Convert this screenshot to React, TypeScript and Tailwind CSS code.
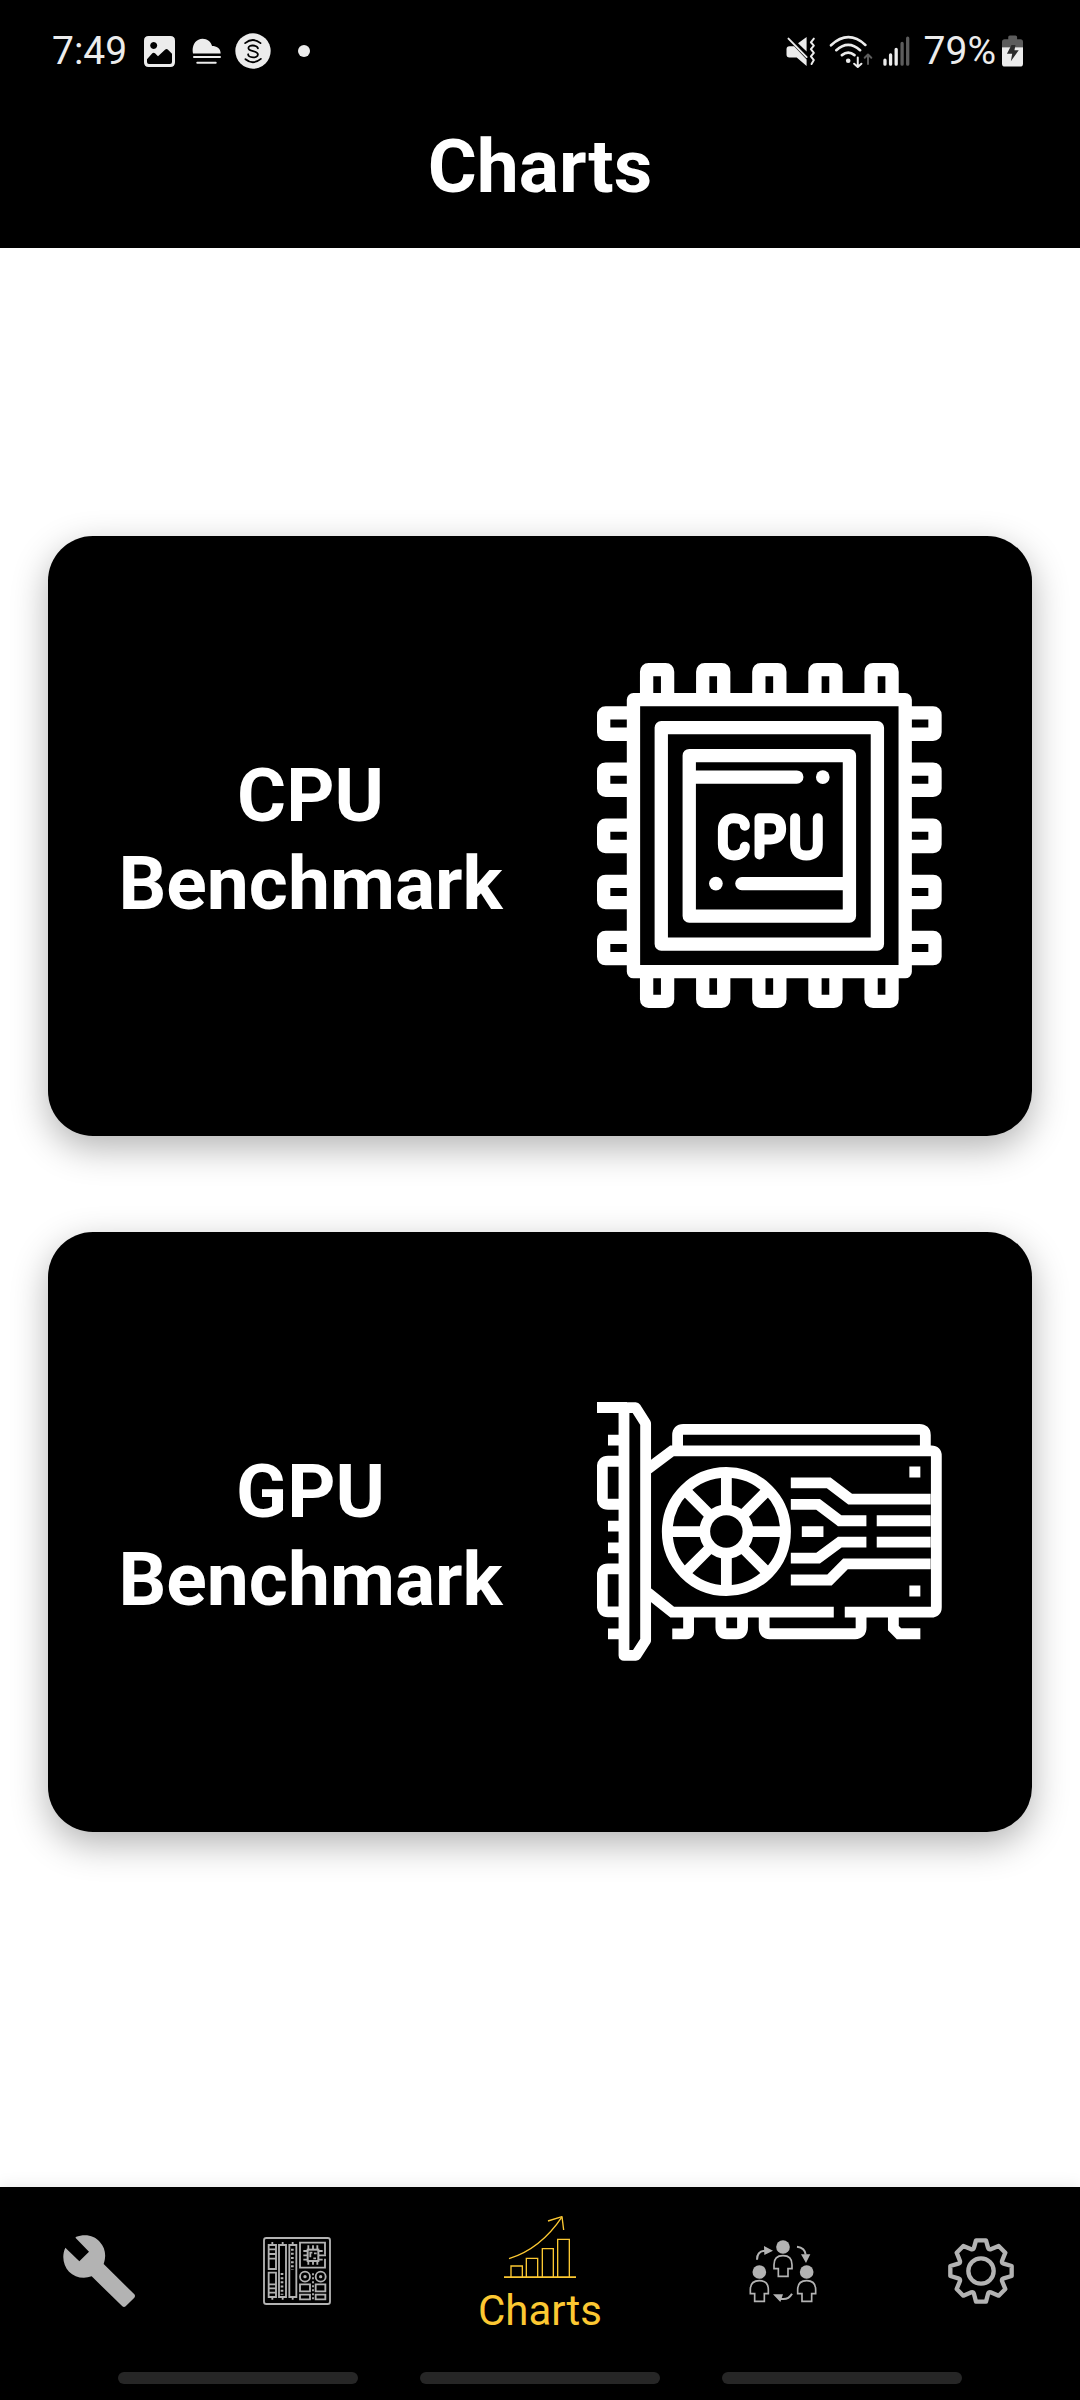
import type { ReactNode } from "react";

/* ---------- status bar icons ---------- */

function PictureIcon() {
  return (
    <svg viewBox="342 48 93 93" className="h-[31px] w-[31px]" aria-hidden="true">
      <path
        fill="#ececec"
        fillRule="evenodd"
        d="M356 48h65q14 0 14 14v65q0 14-14 14h-65q-14 0-14-14V62q0-14 14-14z M371 66a10.500 10.500 0 1 0 .1 0z M351 118l16-18q4-4 8 0l9 9 21-20q5-4 9 0l12 12v25q0 6-6 6h-63q-6 0-6-6z"
      />
    </svg>
  );
}

function FogIcon() {
  return (
    <svg viewBox="486 54 88 80" className="h-[27px] w-[29px]" aria-hidden="true">
      <path fill="#ececec" d="M489 100c-5-24 8-45 29-45 15 0 25 9 29 22 13 0 26 6 26 23z" />
      <path stroke="#ececec" strokeWidth="6" strokeLinecap="round" d="M492 111h79M502 128h56" />
    </svg>
  );
}

function CoinIcon() {
  return (
    <svg viewBox="616 39 108 110" className="h-9 w-9" aria-hidden="true">
      <circle cx="670" cy="94" r="54" fill="#ececec" />
      <g fill="none" stroke="#000" strokeWidth="5.500" strokeLinecap="round">
        <path d="M646 70q24-19 47 0M647 119q23 19 47-1" />
        <path d="M685 86c-1-10-29-13-29-1 0 13 29 6 29 20 0 12-29 11-30-1" />
      </g>
    </svg>
  );
}

function MuteIcon() {
  return (
    <svg viewBox="48 48 90 88" className="h-[29px] w-[30px]" aria-hidden="true">
      <path fill="#ececec" d="M58 76h14l38 40v20L80 110H58q-9 0-9-9V85q0-9 9-9zM84 67l26-19v44z" />
      <path stroke="#ececec" strokeWidth="6" strokeLinecap="round" d="M55 53l55 56" />
      <path
        fill="none"
        stroke="#ececec"
        strokeWidth="6"
        strokeLinecap="round"
        strokeLinejoin="round"
        d="M132 53l-9 11 9 10-9 11 9 11-9 11 9 11-7 12"
      />
    </svg>
  );
}

function WifiIcon() {
  return (
    <svg viewBox="178 40 134 100" className="h-[33px] w-[45px]" aria-hidden="true">
      <g fill="none" stroke="#ececec" strokeWidth="8" strokeLinecap="round">
        <path d="M183 71q52-48 104-1M199 86q36-32 72 0M216 101q19-15 38 0" />
        <path strokeWidth="6" strokeLinejoin="round" d="M264 108v28M253 127l11 10 11-10" />
      </g>
      <circle cx="235" cy="118" r="7" fill="#ececec" />
      <path
        fill="none"
        stroke="#5c5c5c"
        strokeWidth="6"
        strokeLinecap="round"
        strokeLinejoin="round"
        d="M295 128V100M285 109l10-10 10 10"
      />
    </svg>
  );
}

function SignalIcon() {
  return (
    <svg viewBox="339 46 82 90" className="h-[30px] w-[27px]" aria-hidden="true">
      <g strokeWidth="10" strokeLinecap="round">
        <path stroke="#ececec" d="M345 119v12M362 103v28M379 86v45" />
        <path stroke="#5c5c5c" d="M397 68v63M414 52v79" />
      </g>
    </svg>
  );
}

function BatteryIcon() {
  return (
    <svg viewBox="698 46 64 95" className="h-8 w-[21px]" aria-hidden="true">
      <path fill="#5c5c5c" d="M717 51q0-5 5-5h17q5 0 5 5v7h10q8 0 8 8v16h-64V66q0-8 8-8h11z" />
      <path fill="#ececec" d="M698 82h64v50q0 9-9 9h-46q-9 0-9-9z" />
      <path fill="#2b2b2b" d="M727 75l12 0-3 16h13l-24 34 4-23h-16z" />
    </svg>
  );
}

/* ---------- card illustrations ---------- */

const PINS = [0, 168.500, 337, 505.500, 674];

function CpuArt() {
  return (
    <svg viewBox="51 54 1036 1036" className="w-full" aria-hidden="true">
      <g fill="none" stroke="#fff" strokeWidth="40" strokeLinejoin="round">
        {PINS.map((p) => (
          <g key={p}>
            <path d={`M${200 + p} 164V80q0-6 6-6h51q6 0 6 6V164`} />
            <path d={`M${200 + p} 980v84q0 6 6 6h51q6 0 6-6V980`} />
            <path d={`M160 ${204 + p}H77q-6 0-6 6v52q0 6 6 6H160`} />
            <path d={`M977 ${204 + p}h83q6 0 6 6v52q0 6-6 6H977`} />
          </g>
        ))}
        <rect x="160.500" y="164" width="816" height="817" />
        <rect x="244" y="248" width="649" height="650" />
        <rect x="328" y="332" width="481" height="482" />
        <path strokeLinecap="round" d="M334 396.500H651M486 716.500H806" />
      </g>
      <circle cx="729" cy="396.500" r="20.500" fill="#fff" />
      <circle cx="408" cy="716.500" r="20.500" fill="#fff" />
      <g fill="none" stroke="#fff" strokeWidth="30" strokeLinecap="round" strokeLinejoin="round">
        <path d="M495 543v-1c0-14-14-22-33-22s-33 14-33 33v45c0 20 14 34 33 34s33-11 33-26" />
        <path d="M539 629V520h33q32 0 32 32v0q0 32-32 32h-33" />
        <path d="M646 520v79q0 33 34 33t34-33V520" />
      </g>
    </svg>
  );
}

function GpuArt() {
  return (
    <svg viewBox="51 67 1036 779" className="w-full" aria-hidden="true">
      <g fill="none" stroke="#fff" strokeWidth="32.500">
        <path strokeLinejoin="round" d="M132 84V828h36l29-45V131L167 84h-35" />
        <path d="M51 83.500h90M84 181.500h40M84 439.500h40M84 505h40M84 763.500h40" />
        <path d="M124 245H84q-17 0-17 17v95q0 17 17 17h40M124 568H84q-17 0-17 17v95q0 17 17 17h40" />
        <path d="M204 268l72-54h779q15 0 15 15v454q0 15-15 15H795M204 640l73 58H762" />
        <path d="M293 214v-48q0-17 17-17h709q18 0 18 17v48" />
        <path d="M633 310h114l64 48.500h242M633 374.500h82l65 49h80M891 423.500h162M666 456h65M633 536h82l65-48h80M891 488h162M633 601.500h116l48-48.500h256" />
        <path d="M277 763.500h44q5 0 5-5V712M423 712v33q0 18 17 18h31q17 0 17-18v-33M553 712v33q0 18 17 18h256q18 0 18-18v-33M941 712v34l17 17h64" />
        <circle cx="439.500" cy="456" r="177.500" />
        <circle cx="439.500" cy="456" r="65" />
        <path d="M439.500 386v-98M439.500 526v98M369.500 456H270M509.500 456H610M390 406.500l-68-68M489 505.500l68 68M390 505.500l-68 68M489 406.500l68-68" />
      </g>
      <path fill="#fff" d="M989 261h33v33h-33zM989 618h33v33h-33z" />
    </svg>
  );
}

/* ---------- tab icons ---------- */

function WrenchIcon() {
  return (
    <svg viewBox="69 104 216 216" className="h-[72px] w-[72px]" aria-hidden="true">
      <path
        fill="#b3b3b3"
        d="M107 110C135 99 163 105 179 124C197 143 199 168 191 191L283 282Q287 287 283 292L257 318Q252 322 247 318L155 228C130 237 104 231 87 214C69 195 65 166 76 142L118 183L147 154L107 113Z"
      />
    </svg>
  );
}

function MotherboardIcon() {
  return (
    <svg viewBox="669 111 204 204" className="h-[68px] w-[68px]" aria-hidden="true">
      <g fill="none" stroke="#b3b3b3" strokeWidth="5.500">
        <rect x="672" y="114" width="198" height="198" rx="7" />
        <path d="M686 135h22v72h-22zM686 218h22v73h-22zM717 135h21v156h-21zM748 135h21v156h-21z" />
        <path d="M697 126v9M697 291v8M728 126v9M728 291v8M758 126v9M758 291v8" />
        <path d="M686 148h22M686 162h22M686 176h22M686 253h22M686 265h22M686 278h22" />
        <path strokeDasharray="6 6.500" strokeWidth="8" d="M757 146v64M726 219v65" />
        <path d="M855 164v-36H780v75H855v-27" />
        <rect x="803" y="149" width="32" height="34" strokeWidth="6" />
        <path d="M805 136v12M819 136v12M832 136v12M805 183v11M819 183v11M832 183v11M790 153h12M790 166h12M790 179h12M836 153h12M836 166h22M836 179h12" />
        <path d="M811 172v-14h6M822 160h8M820 175h8" />
        <circle cx="795" cy="230" r="15" />
        <circle cx="842" cy="230" r="15" />
        <path d="M780 253h30v21h-30zM827 253h29v21h-29zM780 284h30v14h-30zM827 284h29v14h-29z" />
        <path strokeDasharray="6 6" d="M819 220v79" />
      </g>
      <circle cx="795" cy="230" r="5" fill="#b3b3b3" />
      <circle cx="842" cy="230" r="5" fill="#b3b3b3" />
    </svg>
  );
}

function GrowthIcon() {
  return (
    <svg viewBox="132 63 216 216" className="h-[72px] w-[72px]" aria-hidden="true">
      <g fill="none" stroke="#fcc832" strokeWidth="4">
        <path strokeWidth="5" d="M132 261.500h216" />
        <path d="M153 261v-33h34v33M199 261v-56h34v56M247 261v-85h33v85M293 261V148h35v113" />
        <path d="M147 206q95-30 158-124" />
        <path d="M264 93l42-13 5 40" strokeLinejoin="round" />
      </g>
    </svg>
  );
}

const PEOPLE = [
  { x: 159, y: 108 },
  { x: 88, y: 183 },
  { x: 230, y: 183 },
];

function CommunityIcon() {
  return (
    <svg viewBox="51 72 216 216" className="h-[72px] w-[72px]" aria-hidden="true">
      {PEOPLE.map(({ x, y }) => (
        <g key={x} transform={`translate(${x} ${y})`}>
          <circle r="20.500" fill="#b3b3b3" />
          <path
            fill="none"
            stroke="#b3b3b3"
            strokeWidth="5"
            d="M-14 65h-13V53q0-27 27-27t27 27v12H15v23H-14z"
          />
        </g>
      ))}
      <g fill="none" stroke="#b3b3b3" strokeWidth="6">
        <path d="M81 146q0-26 24-27M201 107q24 3 26 24M186 248q-12 21-36 15" />
      </g>
      <path fill="#b3b3b3" d="M102 105l27 14-26 13zM213 130h28l-13 26zM129 250h30l-8 23z" />
    </svg>
  );
}

function GearIcon() {
  return (
    <svg viewBox="645 75 216 216" className="h-[72px] w-[72px]" aria-hidden="true">
      <g fill="none" stroke="#b3b3b3" strokeWidth="13" strokeLinejoin="round">
        <circle cx="753" cy="183" r="38" />
        <path d="M738 91h30l6 22q2 6 8 5l24-10 20 20-10 25q-1 6 5 8l24 7v30l-24 7q-6 2-5 8l10 24-20 20-24-10q-6-1-8 5l-6 23h-30l-6-23q-2-6-8-5l-24 10-20-20 10-24q1-6-5-8l-24-7v-30l24-7q6-2 5-8l-10-25 20-20 24 10q6 1 8-5z" />
      </g>
    </svg>
  );
}

/* ---------- building blocks ---------- */

function BenchmarkCard({ title, children }: { title: string; children: ReactNode }) {
  return (
    <button
      type="button"
      className="flex h-[600px] w-full items-center rounded-[45px] bg-black pr-[90px] text-white shadow-[0_12px_36px_rgba(0,0,0,0.3)]"
    >
      <span className="flex-1 pt-1.5 pr-6 text-center text-[75px] leading-[88px] font-bold">
        {title}
        <br />
        Benchmark
      </span>
      <span className="block w-[345px]">{children}</span>
    </button>
  );
}

function Tab({ label, children }: { label: string; children: ReactNode }) {
  return (
    <button type="button" aria-label={label} className="flex items-center justify-center">
      {children}
    </button>
  );
}

export default function App() {
  return (
    <div className="flex min-h-screen flex-col bg-white font-['Roboto',sans-serif]">
      <header className="flex h-[248px] flex-col bg-black">
        <div className="flex h-[102px] items-center pr-[57px] pl-[52px] text-[39px] text-[#ececec]">
          <span>7:49</span>
          <div className="flex flex-1 items-center pl-[17px]">
            <PictureIcon />
            <span className="pl-[17px]">
              <FogIcon />
            </span>
            <span className="pl-[14px]">
              <CoinIcon />
            </span>
            <span className="ml-[27px] h-3 w-3 rounded-full bg-[#ececec]" />
          </div>
          <div className="flex items-center">
            <MuteIcon />
            <span className="pl-[13px]">
              <WifiIcon />
            </span>
            <span className="pr-[14px] pl-[9px]">
              <SignalIcon />
            </span>
            <span className="pr-[6px]">79%</span>
            <BatteryIcon />
          </div>
        </div>
        <h1 className="pt-5 text-center text-[75px] leading-[88px] font-bold text-white">Charts</h1>
      </header>

      <main className="flex flex-1 flex-col justify-center gap-24 px-12 pb-[68px]">
        <BenchmarkCard title="CPU">
          <CpuArt />
        </BenchmarkCard>
        <BenchmarkCard title="GPU">
          <GpuArt />
        </BenchmarkCard>
      </main>

      <footer className="bg-black shadow-[0_0_16px_rgba(0,0,0,0.1)]">
        <nav className="grid h-[168px] grid-cols-[11fr_11fr_16fr_11fr_11fr]">
          <Tab label="Build">
            <WrenchIcon />
          </Tab>
          <Tab label="Parts">
            <MotherboardIcon />
          </Tab>
          <button
            type="button"
            aria-current="page"
            className="flex flex-col items-center pt-6 text-[42px] leading-[56px] text-[#fcc832]"
          >
            <GrowthIcon />
            Charts
          </button>
          <Tab label="Community">
            <CommunityIcon />
          </Tab>
          <Tab label="Settings">
            <GearIcon />
          </Tab>
        </nav>
        <div className="flex h-[45px] items-center justify-center gap-[62px]">
          <span className="h-3 w-60 rounded-md bg-[#262626]" />
          <span className="h-3 w-60 rounded-md bg-[#262626]" />
          <span className="h-3 w-60 rounded-md bg-[#262626]" />
        </div>
      </footer>
    </div>
  );
}
